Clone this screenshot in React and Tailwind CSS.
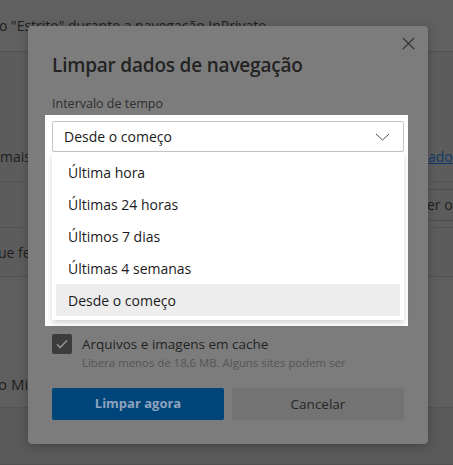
import React from "react";

const font = { fontFamily: '"Open Sans", "Noto Sans", "Liberation Sans", sans-serif' };

function Background() {
  return (
    <div className="flex flex-col w-full h-full text-[14px] text-[#1e1e1e]">
      <div className="h-[52px] shrink-0 bg-[#606060] border-b border-[#525252] flex items-center whitespace-nowrap">
        <span className="-ml-[1px]">o "Estrito" durante a navegação InPrivate</span>
      </div>
      <div className="h-[130px] shrink-0 bg-[#5c5c5c] border-b border-[#535353] flex items-end pb-[14px] whitespace-nowrap">
        <span>mais</span>
        <span className="ml-auto w-[25px] text-[#0e3a66] underline overflow-hidden">ado</span>
      </div>
      <div className="h-[46px] shrink-0 bg-[#5c5c5c] border-b border-[#535353] flex items-center whitespace-nowrap">
        <span className="ml-auto border-y border-[#4e4e4e] h-[32px] flex items-center w-[26px] overflow-hidden">er o</span>
      </div>
      <div className="h-[49px] shrink-0 bg-[#5c5c5c] border-b border-[#535353] flex items-center whitespace-nowrap">
        <span className="-ml-[2px]">ue fe</span>
      </div>
      <div className="h-[131px] shrink-0 bg-[#5e5e5e] border-b border-[#535353] flex items-end pb-[12px] whitespace-nowrap">
        <span className="-ml-[2px] text-[15px]">o Mic</span>
      </div>
      <div className="flex-1 bg-[#595959] border-b border-[#515151]" />
    </div>
  );
}

function Chevron() {
  return (
    <svg width="15" height="8" viewBox="0 0 15 8" fill="none">
      <path d="M1 1 L7.5 7 L14 1" stroke="#505050" strokeWidth="1" />
    </svg>
  );
}

function CloseX() {
  return (
    <svg width="13" height="13" viewBox="0 0 13 13" fill="none">
      <path d="M0.8 0.8 L12.2 12.2 M12.2 0.8 L0.8 12.2" stroke="#2a2a2a" strokeWidth="1.1" />
    </svg>
  );
}

const items = ["Última hora", "Últimas 24 horas", "Últimos 7 dias", "Últimas 4 semanas", "Desde o começo"];

function Modal() {
  return (
    <div className="absolute left-[28px] top-[26px] w-[400px] h-[418px] bg-[#7c7c7c] rounded-[4px] shadow-[0_2px_8px_rgba(0,0,0,0.25)] px-[24px] flex flex-col">
      <button className="absolute right-[12px] top-[9px] w-[16px] h-[16px] flex items-center justify-center">
        <CloseX />
      </button>
      <h1 className="mt-[26px] text-[19px] leading-[26px] font-semibold text-[#232323] tracking-[-0.2px]">
        Limpar dados de navegação
      </h1>
      <div className="mt-[18px] text-[12.5px] leading-[16px] text-[#2e2e2e]">Intervalo de tempo</div>
      <div className="mt-[3px] -ml-[7px] -mr-[4px] bg-white pt-[6px] pl-[7px] pr-[4px] pb-[6px]">
        <div className="h-[31px] border border-[#c6c6c6] rounded-[2px] flex items-center pl-[11px] pr-[13px] text-[14px] text-[#1b1b1b]">
          <span>Desde o começo</span>
          <span className="ml-auto flex items-center">
            <Chevron />
          </span>
        </div>
        <div className="bg-white shadow-[0_3px_6px_rgba(0,0,0,0.18)] p-[4px]">
          {items.map((t, i) => (
            <div
              key={t}
              className={
                i === 4
                  ? "h-[32px] flex items-center pl-[12px] text-[14px] text-[#1b1b1b] bg-[#ededed]"
                  : "h-[32px] flex items-center pl-[12px] text-[14px] text-[#1b1b1b]"
              }
            >
              {t}
            </div>
          ))}
        </div>
      </div>
      <div className="mt-[8px] flex gap-[10px]">
        <div className="w-[20px] h-[20px] rounded-[2px] bg-[#3c3c3c] flex items-center justify-center shrink-0">
          <svg width="12" height="10" viewBox="0 0 12 10" fill="none">
            <path d="M1 5.2 L4.2 8.4 L11 1.5" stroke="#9a9a9a" strokeWidth="1.4" />
          </svg>
        </div>
        <div className="flex flex-col">
          <div className="text-[13.5px] leading-[20px] text-[#232323]">Arquivos e imagens em cache</div>
          <div className="text-[11.4px] leading-[18px] text-[#555555]">Libera menos de 18,6 MB. Alguns sites podem ser</div>
        </div>
      </div>
      <div className="mt-[16px] flex gap-[8px]">
        <button className="w-[172px] h-[32px] rounded-[2px] bg-[#00457a] text-[#8ea4bd] text-[13px] font-bold">
          Limpar agora
        </button>
        <button className="w-[172px] h-[32px] rounded-[2px] bg-[#737373] text-[#262626] text-[13.5px]">
          Cancelar
        </button>
      </div>
    </div>
  );
}

export default function App() {
  return (
    <div className="relative w-[453px] h-[465px] overflow-hidden bg-[#5a5a5a]" style={font}>
      <Background />
      <Modal />
    </div>
  );
}
